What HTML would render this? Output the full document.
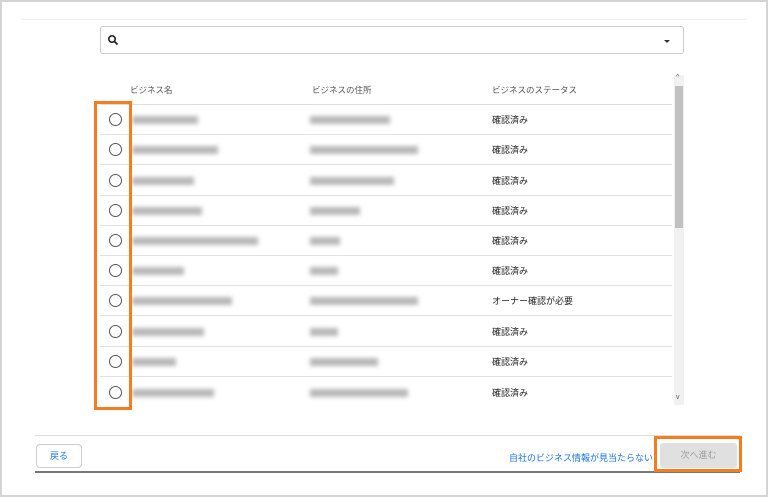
<!DOCTYPE html>
<html><head><meta charset="utf-8"><style>
*{margin:0;padding:0;box-sizing:border-box}
body{width:768px;height:497px;background:#fff;font-family:"Liberation Sans","Noto Sans CJK JP",sans-serif;position:relative;overflow:hidden}
.frame{position:absolute;left:0;top:0;width:768px;height:497px;border:2px solid #d4d4d4}
.abs{position:absolute}
.row{position:absolute;left:100px;width:572px;height:30px;border-bottom:1px solid #e2e2e2}
.radio{position:absolute;left:9px;top:8px;width:13px;height:13px;border:1.5px solid #555;border-radius:50%}
.blur{position:absolute;top:11px;height:8px;background:#9a9a9a;filter:blur(2px);opacity:.7}
.st{position:absolute;left:392px;top:8px;font-size:9px;color:#222}
.hd{position:absolute;top:84px;font-size:8.5px;color:#555}
</style></head><body>
<div class="frame"></div>
<div class="abs" style="left:22px;top:19px;width:724px;height:1px;background:#f0f0f0"></div>
<div class="abs" style="left:100px;top:26px;width:584px;height:28px;border:1px solid #ccc;border-radius:3px"></div>
<svg class="abs" style="left:107px;top:34px" width="12" height="12"><circle cx="5" cy="5" r="3.2" fill="none" stroke="#222" stroke-width="1.6"/><line x1="7.3" y1="7.3" x2="10.5" y2="10.5" stroke="#222" stroke-width="1.8"/></svg>
<div class="abs" style="left:664px;top:40px;width:0;height:0;border-left:3px solid transparent;border-right:3px solid transparent;border-top:3px solid #333"></div>
<div class="hd" style="left:130px">ビジネス名</div>
<div class="hd" style="left:312px">ビジネスの住所</div>
<div class="hd" style="left:492px">ビジネスのステータス</div>
<div class="abs" style="left:100px;top:104px;width:572px;height:1px;background:#ddd"></div>
<div class="abs" style="left:674px;top:75px;width:10px;height:330px;background:#f1f1f1"></div>
<div class="abs" style="left:675px;top:86px;width:8px;height:142px;background:#c1c1c1"></div>
<div class="abs" style="left:676px;top:74px;font-size:7px;color:#555">^</div>
<div class="abs" style="left:676px;top:394px;font-size:7px;color:#555">v</div>

<div class="row" style="top:105px"><div class="radio"></div><div class="blur" style="left:32px;width:66px"></div><div class="blur" style="left:210px;width:80px"></div><div class="st">確認済み</div></div>
<div class="row" style="top:135px"><div class="radio"></div><div class="blur" style="left:32px;width:86px"></div><div class="blur" style="left:210px;width:108px"></div><div class="st">確認済み</div></div>
<div class="row" style="top:166px"><div class="radio"></div><div class="blur" style="left:32px;width:62px"></div><div class="blur" style="left:210px;width:84px"></div><div class="st">確認済み</div></div>
<div class="row" style="top:196px"><div class="radio"></div><div class="blur" style="left:32px;width:70px"></div><div class="blur" style="left:210px;width:50px"></div><div class="st">確認済み</div></div>
<div class="row" style="top:226px"><div class="radio"></div><div class="blur" style="left:32px;width:126px"></div><div class="blur" style="left:210px;width:30px"></div><div class="st">確認済み</div></div>
<div class="row" style="top:256px"><div class="radio"></div><div class="blur" style="left:32px;width:52px"></div><div class="blur" style="left:210px;width:28px"></div><div class="st">確認済み</div></div>
<div class="row" style="top:286px"><div class="radio"></div><div class="blur" style="left:32px;width:100px"></div><div class="blur" style="left:210px;width:108px"></div><div class="st">オーナー確認が必要</div></div>
<div class="row" style="top:317px"><div class="radio"></div><div class="blur" style="left:32px;width:72px"></div><div class="blur" style="left:210px;width:28px"></div><div class="st">確認済み</div></div>
<div class="row" style="top:347px"><div class="radio"></div><div class="blur" style="left:32px;width:44px"></div><div class="blur" style="left:210px;width:68px"></div><div class="st">確認済み</div></div>
<div class="row" style="top:378px;border-bottom:none"><div class="radio"></div><div class="blur" style="left:32px;width:82px"></div><div class="blur" style="left:210px;width:98px"></div><div class="st">確認済み</div></div>

<div class="abs" style="left:94px;top:101px;width:38px;height:309px;border:3px solid #f57c1f"></div>

<div class="abs" style="left:35px;top:435px;width:705px;height:1px;background:#ddd"></div>
<div class="abs" style="left:35px;top:471px;width:705px;height:2px;background:#777"></div>
<div class="abs" style="left:36px;top:444px;width:46px;height:24px;border:1px solid #ccc;border-radius:4px;font-size:9px;color:#1a73e8;text-align:center;line-height:22px">戻る</div>
<div class="abs" style="left:509px;top:451px;font-size:9px;color:#1a73e8">自社のビジネス情報が見当たらない</div>
<div class="abs" style="left:660px;top:443px;width:77px;height:25px;background:#e0e0e0;border-radius:3px;font-size:9px;color:#9e9e9e;text-align:center;line-height:25px">次へ進む</div>
<div class="abs" style="left:654px;top:436px;width:88px;height:36px;border:3px solid #f57c1f"></div>
</body></html>
